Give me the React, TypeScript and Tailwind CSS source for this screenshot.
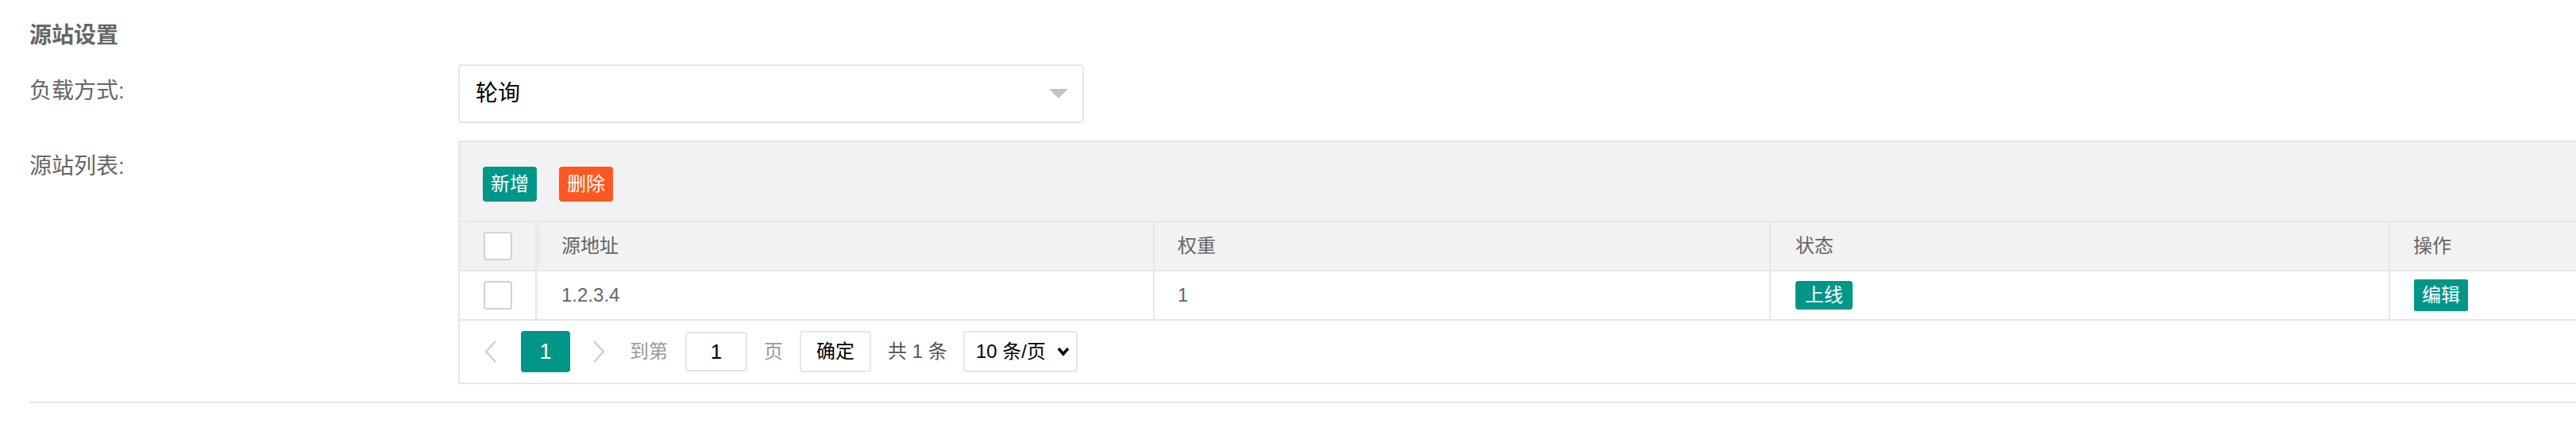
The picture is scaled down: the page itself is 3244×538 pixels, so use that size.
import { useState } from 'react'

const rows = [{ id: 1, addr: '1.2.3.4', weight: 1, online: true }]

function Checkbox() {
  return <div className="h-[36px] w-[36px] rounded-[4px] border-2 border-[#d2d2d2] bg-white" />
}

function PrevArrow() {
  return (
    <svg width="16" height="28" viewBox="0 0 16 28" fill="none">
      <polyline points="14,1 2,14 14,27" stroke="#c8c8c8" strokeWidth="2" />
    </svg>
  )
}

function NextArrow() {
  return (
    <svg width="16" height="28" viewBox="0 0 16 28" fill="none">
      <polyline points="2,1 14,14 2,27" stroke="#c8c8c8" strokeWidth="2" />
    </svg>
  )
}

export default function App() {
  const [mode] = useState('轮询')

  return (
    <div className="h-[538px] w-[3244px] overflow-hidden bg-white font-['Liberation_Sans','Noto_Sans_CJK_SC',sans-serif] text-[28px]">
      <div className="ml-[37px] w-[3600px] border-b-2 border-[#e6e6e6] pb-[22px]">
        <div className="h-[65px] pt-[25px] text-[28px] font-bold leading-[40px] text-[#666]">源站设置</div>

        {/* load mode */}
        <div className="mt-[16px] flex">
          <div className="w-[540px] pt-[14px] leading-[40px] text-[#666]">负载方式:</div>
          <div className="flex h-[74px] w-[788px] items-center justify-between rounded-[4px] border-2 border-[#e6e6e6] pl-[20px] pr-[18px]">
            <span className="leading-[40px] text-black">{mode}</span>
            <svg width="24" height="12" viewBox="0 0 24 12">
              <polygon points="0,0 24,0 12,12" fill="#c2c2c2" />
            </svg>
          </div>
        </div>

        {/* origin list */}
        <div className="mt-[22px] flex">
          <div className="w-[540px] pt-[13px] leading-[40px] text-[#666]">源站列表:</div>
          <div className="w-[3000px] border-2 border-[#e6e6e6] text-[24px]">
            <div className="flex h-[101px] items-start gap-[28px] border-b-2 border-[#e6e6e6] bg-[#f2f2f2] pl-[29px] pt-[31px]">
              <button className="h-[44px] rounded-[4px] bg-[#009688] px-[10px] text-[24px] leading-[44px] text-white" type="button">新增</button>
              <button className="h-[44px] rounded-[4px] bg-[#ff5722] px-[10px] text-[24px] leading-[44px] text-white" type="button">删除</button>
            </div>

            <div className="flex h-[62px] border-b-2 border-[#e6e6e6] bg-[#f2f2f2] text-[#666]">
              <div className="relative z-10 flex w-[97px] items-center justify-center border-r-2 border-[#e6e6e6] bg-[#f2f2f2] shadow-[6px_0_8px_-4px_rgba(0,0,0,0.06)]">
                <Checkbox />
              </div>
              <div className="flex w-[778px] items-center border-r-2 border-[#e6e6e6] pl-[31px]">源地址</div>
              <div className="flex w-[776px] items-center border-r-2 border-[#e6e6e6] pl-[29px]">权重</div>
              <div className="flex w-[780px] items-center border-r-2 border-[#e6e6e6] pl-[31px]">状态</div>
              <div className="flex flex-1 items-center pl-[29px]">操作</div>
            </div>

            {rows.map((row) => (
              <div key={row.id} className="flex h-[62px] border-b-2 border-[#e6e6e6] text-[#666]">
                <div className="relative z-10 flex w-[97px] items-center justify-center border-r-2 border-[#e6e6e6] bg-white shadow-[6px_0_8px_-4px_rgba(0,0,0,0.06)]">
                  <Checkbox />
                </div>
                <div className="flex w-[778px] items-center border-r-2 border-[#e6e6e6] pl-[31px]">{row.addr}</div>
                <div className="flex w-[776px] items-center border-r-2 border-[#e6e6e6] pl-[29px]">{row.weight}</div>
                <div className="flex w-[780px] items-center border-r-2 border-[#e6e6e6] pl-[31px]">
                  <span className="h-[36px] rounded-[4px] bg-[#009688] px-[12px] text-[24px] leading-[36px] text-white">{row.online ? '上线' : '下线'}</span>
                </div>
                <div className="flex flex-1 items-center pl-[30px]">
                  <span className="h-[40px] rounded-[2px] bg-[#009688] px-[10px] text-[24px] leading-[40px] text-white">编辑</span>
                </div>
              </div>
            ))}

            <div className="flex h-[78px] items-center pl-[31px]">
              <PrevArrow />
              <span className="ml-[30px] flex h-[52px] w-[62px] items-center justify-center rounded-[4px] bg-[#009688] text-[27px] text-white">1</span>
              <span className="ml-[28px] flex"><NextArrow /></span>
              <span className="ml-[31px] text-[#999]">到第</span>
              <span className="ml-[22px] flex h-[50px] w-[78px] items-center justify-center rounded-[4px] border-2 border-[#e6e6e6] text-[26px] text-black">1</span>
              <span className="ml-[21px] text-[#999]">页</span>
              <span className="ml-[21px] flex h-[52px] w-[90px] items-center justify-center rounded-[4px] border-2 border-[#e6e6e6] text-black">确定</span>
              <span className="ml-[21px] w-[82px] whitespace-nowrap text-[#555]">共 1 条</span>
              <span className="ml-[13px] flex h-[52px] w-[144px] items-center justify-between rounded-[4px] border-2 border-[#e6e6e6] pl-[14px] pr-[8px] text-black">
                <span className="whitespace-nowrap">10 条/页</span>
                <svg width="16" height="12" viewBox="0 0 16 12" fill="none">
                  <polyline points="2,2 8,9 14,2" stroke="#000" strokeWidth="3.5" />
                </svg>
              </span>
            </div>
          </div>
        </div>
      </div>
    </div>
  )
}
